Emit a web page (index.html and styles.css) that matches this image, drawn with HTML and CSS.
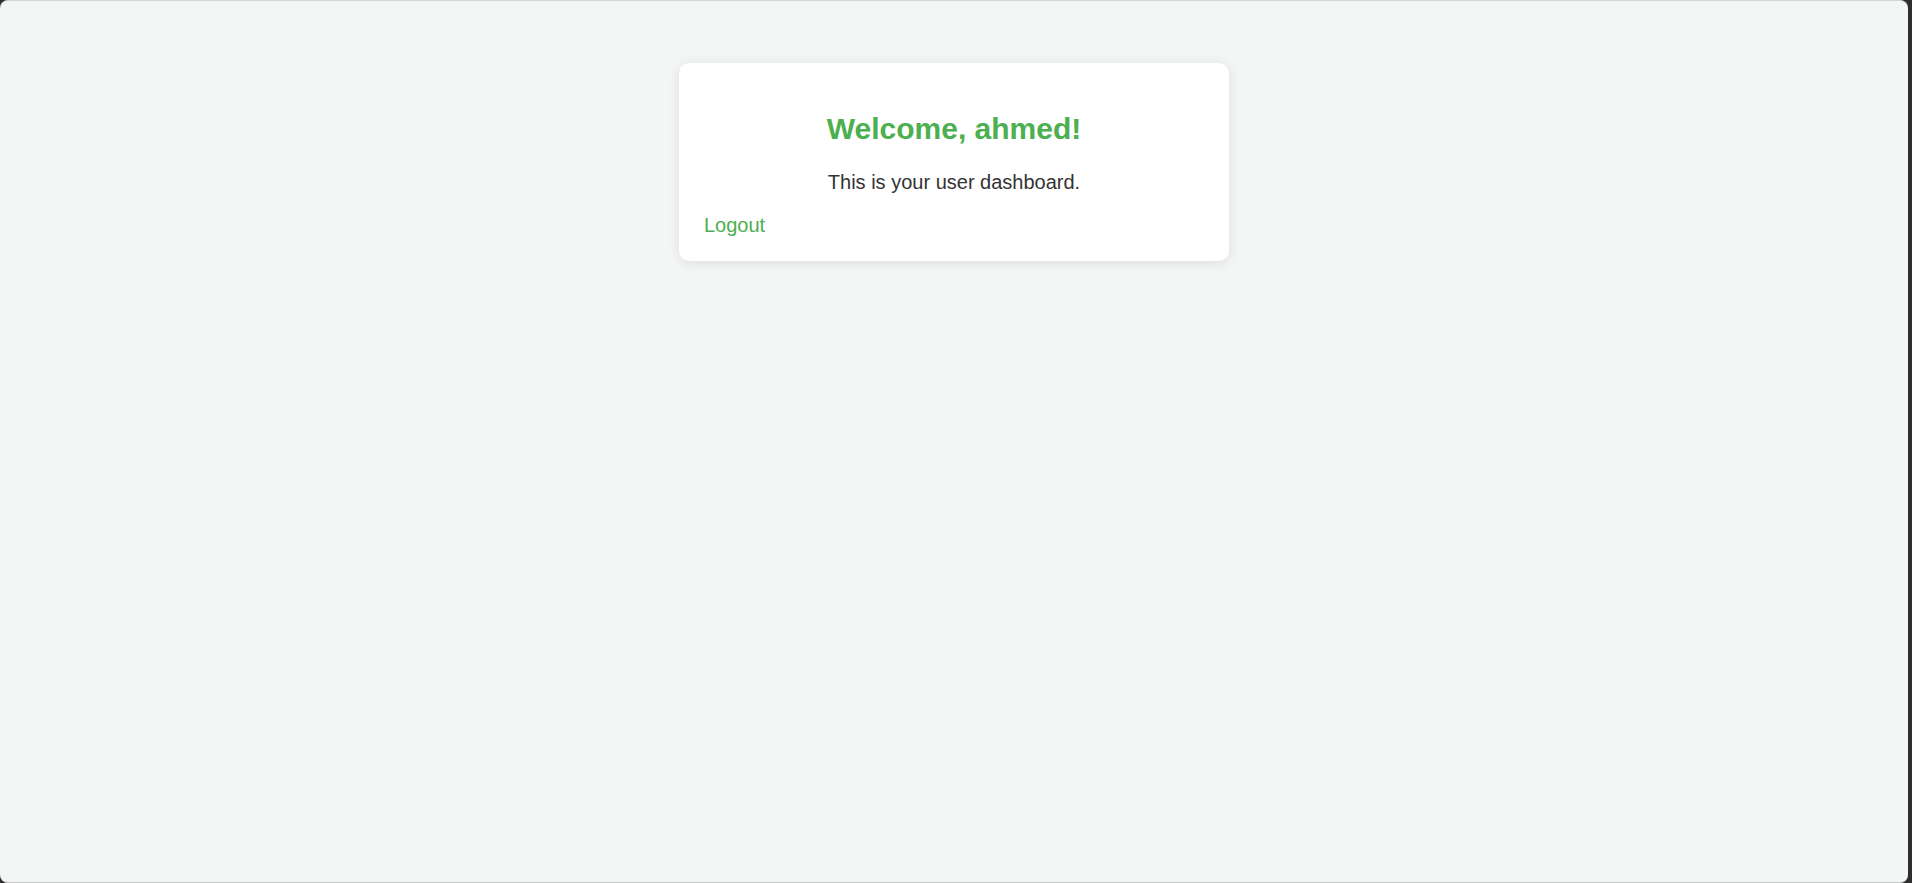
FILE: index.html
```html
<!DOCTYPE html>
<html lang="en">
<head>
<meta charset="utf-8">
<title>Dashboard</title>
<link rel="stylesheet" href="styles.css">
</head>
<body>
<div class="window">
  <div class="container">
    <h2 class="title">Welcome, ahmed!</h2>
    <p class="lead">This is your user dashboard.</p>
    <a class="logout" href="#">Logout</a>
  </div>
</div>
</body>
</html>
```
FILE: styles.css
```css
html {
  background: #2e2e2e;
}
body {
  margin: 0;
  font-family: "Liberation Sans", Arial, sans-serif;
}
.window {
  box-sizing: border-box;
  height: 883px;
  margin-right: 4px;
  background: #f4f6f5;
  border-top: 1px solid #d4d6d5;
  border-bottom: 1px solid #c9cbca;
  border-radius: 8px;
  overflow: hidden;
  padding-top: 62px;
}
.container {
  width: 500px;
  margin: 0 auto;
  background: #ffffff;
  padding: 25px 25px 24px;
  border-radius: 10px;
  box-shadow: 0 2px 12px rgba(0, 0, 0, 0.1);
}
.title {
  font-size: 30px;
  font-weight: bold;
  color: #4caf50;
  text-align: center;
  margin: 24px 0 25px;
}
.lead {
  font-size: 20px;
  color: #333333;
  text-align: center;
  margin: 0 0 20px;
}
.logout {
  font-size: 20px;
  color: #4caf50;
  text-decoration: none;
}
```
